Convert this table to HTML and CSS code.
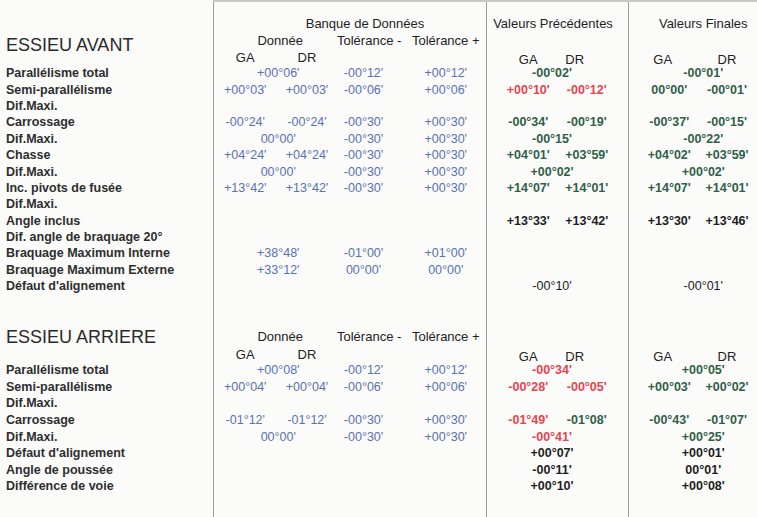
FILE: index.html
```html
<!DOCTYPE html>
<html lang="fr">
<head>
<meta charset="utf-8">
<title>Rapport de géométrie</title>
<link rel="stylesheet" href="styles.css">
</head>
<body>
<table class="sheet">
  <colgroup>
    <col class="w-lbl"><col class="w-bga"><col class="w-bdr"><col class="w-tm"><col class="w-tp"><col class="w-pga"><col class="w-pdr"><col class="w-fga"><col class="w-fdr">
  </colgroup>
  <tbody>
    <tr class="h-top"><td></td><td colspan="4" class="grp top"></td><td colspan="2" class="grp top"></td><td colspan="2" class="grp top"></td></tr>
    <tr class="h-title"><td></td><td colspan="4" class="grp ttl bank">Banque de Données</td><td colspan="2" class="grp ttl prev">Valeurs Précédentes</td><td colspan="2" class="grp ttl fin">Valeurs Finales</td></tr>
    <tr class="h-sub"><td rowspan="2" class="axle front">ESSIEU AVANT</td><td colspan="2" class="grp sub donnee">Donnée</td><td class="sub tm">Tolérance -</td><td class="sub tp">Tolérance +</td><td colspan="2" class="grp"></td><td colspan="2" class="grp"></td></tr>
    <tr class="h-ga"><td class="grp gh">GA</td><td class="gh">DR</td><td></td><td></td><td class="grp gh2 pga">GA</td><td class="gh2 pdr-h">DR</td><td class="grp gh2">GA</td><td class="gh2">DR</td></tr>

    <tr class="row"><td class="lbl">Parallélisme total</td><td colspan="2" class="grp v b bm">+00°06'</td><td class="v b">-00°12'</td><td class="v b tp">+00°12'</td><td colspan="2" class="grp v g pm">-00°02'</td><td colspan="2" class="grp v g fm">-00°01'</td></tr>
    <tr class="row"><td class="lbl">Semi-parallélisme</td><td class="grp v b">+00°03'</td><td class="v b">+00°03'</td><td class="v b">-00°06'</td><td class="v b tp">+00°06'</td><td class="grp v r pga">+00°10'</td><td class="v r pdr">-00°12'</td><td class="grp v g fga">00°00'</td><td class="v g">-00°01'</td></tr>
    <tr class="row"><td class="lbl">Dif.Maxi.</td><td colspan="4" class="grp"></td><td colspan="2" class="grp"></td><td colspan="2" class="grp"></td></tr>
    <tr class="row"><td class="lbl">Carrossage</td><td class="grp v b">-00°24'</td><td class="v b">-00°24'</td><td class="v b">-00°30'</td><td class="v b tp">+00°30'</td><td class="grp v g pga">-00°34'</td><td class="v g pdr">-00°19'</td><td class="grp v g fga">-00°37'</td><td class="v g">-00°15'</td></tr>
    <tr class="row"><td class="lbl">Dif.Maxi.</td><td colspan="2" class="grp v b bm">00°00'</td><td class="v b">-00°30'</td><td class="v b tp">+00°30'</td><td colspan="2" class="grp v g pm">-00°15'</td><td colspan="2" class="grp v g fm">-00°22'</td></tr>
    <tr class="row"><td class="lbl">Chasse</td><td class="grp v b">+04°24'</td><td class="v b">+04°24'</td><td class="v b">-00°30'</td><td class="v b tp">+00°30'</td><td class="grp v g pga">+04°01'</td><td class="v g pdr">+03°59'</td><td class="grp v g fga">+04°02'</td><td class="v g">+03°59'</td></tr>
    <tr class="row"><td class="lbl">Dif.Maxi.</td><td colspan="2" class="grp v b bm">00°00'</td><td class="v b">-00°30'</td><td class="v b tp">+00°30'</td><td colspan="2" class="grp v g pm">+00°02'</td><td colspan="2" class="grp v g fm">+00°02'</td></tr>
    <tr class="row"><td class="lbl">Inc. pivots de fusée</td><td class="grp v b">+13°42'</td><td class="v b">+13°42'</td><td class="v b">-00°30'</td><td class="v b tp">+00°30'</td><td class="grp v g pga">+14°07'</td><td class="v g pdr">+14°01'</td><td class="grp v g fga">+14°07'</td><td class="v g">+14°01'</td></tr>
    <tr class="row"><td class="lbl">Dif.Maxi.</td><td colspan="4" class="grp"></td><td colspan="2" class="grp"></td><td colspan="2" class="grp"></td></tr>
    <tr class="row"><td class="lbl">Angle inclus</td><td colspan="4" class="grp"></td><td class="grp v k pga">+13°33'</td><td class="v k pdr">+13°42'</td><td class="grp v k fga">+13°30'</td><td class="v k">+13°46'</td></tr>
    <tr class="row"><td class="lbl">Dif. angle de braquage 20°</td><td colspan="4" class="grp"></td><td colspan="2" class="grp"></td><td colspan="2" class="grp"></td></tr>
    <tr class="row"><td class="lbl">Braquage Maximum Interne</td><td colspan="2" class="grp v b bm">+38°48'</td><td class="v b">-01°00'</td><td class="v b tp">+01°00'</td><td colspan="2" class="grp"></td><td colspan="2" class="grp"></td></tr>
    <tr class="row"><td class="lbl">Braquage Maximum Externe</td><td colspan="2" class="grp v b bm">+33°12'</td><td class="v b">00°00'</td><td class="v b tp">00°00'</td><td colspan="2" class="grp"></td><td colspan="2" class="grp"></td></tr>
    <tr class="row"><td class="lbl">Défaut d'alignement</td><td colspan="4" class="grp"></td><td colspan="2" class="grp v k thin pm">-00°10'</td><td colspan="2" class="grp v k thin fm">-00°01'</td></tr>

    <tr class="gap"><td></td><td colspan="4" class="grp"></td><td colspan="2" class="grp"></td><td colspan="2" class="grp"></td></tr>

    <tr class="h-sub"><td class="axle">ESSIEU ARRIERE</td><td colspan="2" class="grp sub donnee">Donnée</td><td class="sub">Tolérance -</td><td class="sub tp">Tolérance +</td><td colspan="2" class="grp"></td><td colspan="2" class="grp"></td></tr>
    <tr class="h-ga2"><td></td><td class="grp gh">GA</td><td class="gh">DR</td><td></td><td></td><td class="grp gh2 pga">GA</td><td class="gh2 pdr-h">DR</td><td class="grp gh2">GA</td><td class="gh2">DR</td></tr>

    <tr class="row2"><td class="lbl">Parallélisme total</td><td colspan="2" class="grp v b bm">+00°08'</td><td class="v b">-00°12'</td><td class="v b tp">+00°12'</td><td colspan="2" class="grp v r pm">-00°34'</td><td colspan="2" class="grp v g fm">+00°05'</td></tr>
    <tr class="row2"><td class="lbl">Semi-parallélisme</td><td class="grp v b">+00°04'</td><td class="v b">+00°04'</td><td class="v b">-00°06'</td><td class="v b tp">+00°06'</td><td class="grp v r pga">-00°28'</td><td class="v r pdr">-00°05'</td><td class="grp v g fga">+00°03'</td><td class="v g">+00°02'</td></tr>
    <tr class="row2"><td class="lbl">Dif.Maxi.</td><td colspan="4" class="grp"></td><td colspan="2" class="grp"></td><td colspan="2" class="grp"></td></tr>
    <tr class="row2"><td class="lbl">Carrossage</td><td class="grp v b">-01°12'</td><td class="v b">-01°12'</td><td class="v b">-00°30'</td><td class="v b tp">+00°30'</td><td class="grp v r pga">-01°49'</td><td class="v g pdr">-01°08'</td><td class="grp v g fga">-00°43'</td><td class="v g">-01°07'</td></tr>
    <tr class="row2"><td class="lbl">Dif.Maxi.</td><td colspan="2" class="grp v b bm">00°00'</td><td class="v b">-00°30'</td><td class="v b tp">+00°30'</td><td colspan="2" class="grp v r pm">-00°41'</td><td colspan="2" class="grp v g fm">+00°25'</td></tr>
    <tr class="row2"><td class="lbl">Défaut d'alignement</td><td colspan="4" class="grp"></td><td colspan="2" class="grp v k pm">+00°07'</td><td colspan="2" class="grp v k fm">+00°01'</td></tr>
    <tr class="row2"><td class="lbl">Angle de poussée</td><td colspan="4" class="grp"></td><td colspan="2" class="grp v k pm">-00°11'</td><td colspan="2" class="grp v k fm">00°01'</td></tr>
    <tr class="row2"><td class="lbl">Différence de voie</td><td colspan="4" class="grp"></td><td colspan="2" class="grp v k pm">+00°10'</td><td colspan="2" class="grp v k fm">+00°08'</td></tr>

    <tr class="tail"><td></td><td colspan="4" class="grp"></td><td colspan="2" class="grp"></td><td colspan="2" class="grp"></td></tr>
  </tbody>
</table>
</body>
</html>
```

FILE: styles.css
```css
html, body {
  margin: 0;
  padding: 0;
}

body {
  width: 757px;
  height: 517px;
  overflow: hidden;
  background: #fbfbfa;
  font-family: "Liberation Sans", Arial, sans-serif;
  color: #2b2b2b;
}

.sheet {
  width: 757px;
  height: 517px;
  table-layout: fixed;
  border-collapse: collapse;
  border-spacing: 0;
}

.w-lbl { width: 213px; }
.w-bga { width: 64px; }
.w-bdr { width: 60px; }
.w-tm  { width: 53px; }
.w-tp  { width: 96px; }
.w-pga { width: 71px; }
.w-pdr { width: 71px; }
.w-fga { width: 69px; }
.w-fdr { width: 60px; }

.sheet td {
  padding: 0;
  white-space: nowrap;
  text-align: center;
  vertical-align: middle;
  overflow: visible;
}

.sheet td.grp {
  border-left: 1px solid #9d9d9d;
}

.sheet td.top {
  border-top: 2px solid #c9c9c9;
}

/* row heights */
.h-top   { height: 14px; }
.h-title { height: 17px; }
.h-sub   { height: 18px; }
.h-ga    { height: 15px; }
.row     { height: 16.4px; }
.gap     { height: 32.4px; }
.h-ga2   { height: 15px; }
.row2    { height: 16.6px; }
.tail    { height: auto; }

/* headings */
.ttl {
  font-size: 13px;
  line-height: 17px;
  color: #1e1e1e;
}
.bank { padding-left: 31px !important; }
.prev { padding-right: 8px !important; }
.fin  { padding-left: 21px !important; }

.sub {
  font-size: 13px;
  line-height: 16px;
  color: #222;
}
.donnee { padding-left: 10px !important; }

.gh {
  font-size: 13px;
  line-height: 14px;
  vertical-align: top !important;
  padding-top: 1px !important;
  color: #222;
}
.gh2 {
  font-size: 13px;
  line-height: 11px;
  vertical-align: top !important;
  padding-top: 4px !important;
  color: #222;
}
.pdr-h { padding-right: 35px !important; }

.axle {
  text-align: left !important;
  padding-left: 6px !important;
  font-size: 18px;
  line-height: 20px;
  color: #2a2a2a;
}
.axle.front {
  vertical-align: top !important;
  padding-top: 3px !important;
}

.lbl {
  text-align: left !important;
  padding-left: 6px !important;
  font-size: 12.5px;
  font-weight: bold;
  line-height: 14px;
  color: #2e2e2e;
}

/* values */
.v {
  font-size: 12.5px;
  line-height: 14px;
}
.b { color: #5871b3; }
.r { color: #e8434f; font-weight: bold; }
.g { color: #2f5f47; font-weight: bold; }
.k { color: #1e1e1e; font-weight: bold; }
.k.thin { font-weight: normal; color: #1a1a1a; }

.bm  { padding-left: 6px !important; }
.tp  { padding-left: 16px !important; }
.pga { padding-left: 13px !important; }
.pdr { padding-right: 11px !important; }
.pm  { padding-right: 10px !important; }
.fga { padding-left: 13px !important; }
.fm  { padding-left: 21px !important; }
```
